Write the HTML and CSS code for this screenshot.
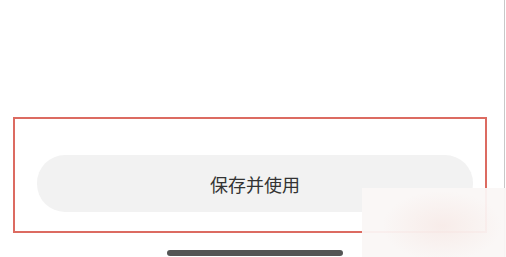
FILE: index.html
```html
<!DOCTYPE html>
<html lang="zh">
<head>
<meta charset="utf-8">
<link rel="stylesheet" href="styles.css">
</head>
<body>
<div class="page">
  <div class="frame">
    <div class="btn">保存并使用</div>
  </div>
  <div class="home-bar"></div>
  <div class="edge"></div>
  <div class="watermark"></div>
</div>
</body>
</html>
```
FILE: styles.css
```css
html, body {
  margin: 0;
  padding: 0;
  background: #fff;
}
.page {
  position: relative;
  width: 506px;
  height: 257px;
  overflow: hidden;
  display: flex;
  flex-direction: column;
  font-family: "Noto Sans CJK SC", "Noto Sans", sans-serif;
}
.frame {
  margin: 117px 0 0 13px;
  width: 474px;
  height: 116px;
  box-sizing: border-box;
  border: 2px solid #dc6b61;
  padding: 36px 12px 0 22px;
}
.btn {
  height: 57px;
  border-radius: 28px;
  background: #f2f2f2;
  color: #333;
  font-size: 18px;
  display: flex;
  align-items: center;
  justify-content: center;
}
.home-bar {
  margin: 17px 0 0 167px;
  width: 176px;
  height: 6px;
  border-radius: 3px;
  background: #555;
}
.edge {
  position: absolute;
  left: 504px;
  top: 0;
  width: 1px;
  height: 257px;
  background: #c8c8c8;
}
.watermark {
  position: absolute;
  left: 362px;
  top: 188px;
  width: 144px;
  height: 69px;
  background:
    radial-gradient(ellipse 60px 35px at 80px 38px, rgba(245, 225, 220, 0.5), rgba(255, 255, 255, 0) 100%),
    rgba(250, 247, 246, 0.95);
}
```
